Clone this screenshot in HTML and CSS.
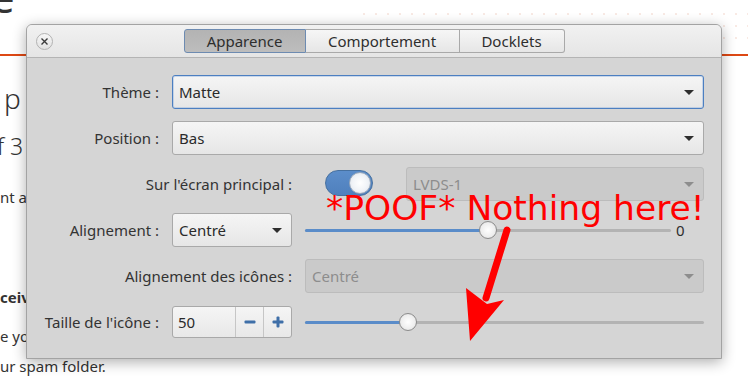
FILE: index.html
```
<!DOCTYPE html>
<html lang="fr">
<head>
    <meta charset="UTF-8">
    <title>Cairo-Dock - Configuration</title>
    <link rel="stylesheet" href="styles.css">
</head>
<body>
    <!-- Page behind the dialog -->
    <header class="site-header">
        <div class="site-title">e</div>
        <div class="site-dots"></div>
    </header>

    <main class="site-body">
        <h2 class="post-title">p</h2>
        <h3 class="post-sub">f 3</h3>
        <p class="post-text">nt a</p>
        <p class="post-strong">ceiv</p>
        <p class="post-text post-near">e yo</p>
        <p class="post-text post-last">ur spam folder.</p>
    </main>

    <!-- Config dialog -->
    <div class="dialog">
        <div class="titlebar">
            <div class="close-btn">
                <svg width="9" height="9" viewBox="0 0 9 9"><path d="M1.5 1.5 L7.5 7.5 M7.5 1.5 L1.5 7.5" stroke="#3a3a3a" stroke-width="1.4"/></svg>
            </div>
            <div class="tabs">
                <div class="tab active tab-1">Apparence</div>
                <div class="tab tab-2">Comportement</div>
                <div class="tab tab-3">Docklets</div>
            </div>
            <div></div>
        </div>

        <div class="form">
            <div class="label">Thème :</div>
            <div class="combo focused span-2"><span>Matte</span><i class="arrow"></i></div>

            <div class="label">Position :</div>
            <div class="combo span-2"><span>Bas</span><i class="arrow"></i></div>

            <div class="label span-label">Sur l'écran principal :</div>
            <div class="screen-cell">
                <div class="toggle"><div class="toggle-knob"></div></div>
                <div class="combo disabled"><span>LVDS-1</span><i class="arrow"></i></div>
            </div>

            <div class="label">Alignement :</div>
            <div class="combo"><span>Centré</span><i class="arrow"></i></div>
            <div class="slider-cell">
                <div class="slider">
                    <div class="track-fill" style="width: 183px;"><div class="knob"></div></div>
                </div>
                <div class="slider-value">0</div>
            </div>

            <div class="label span-label">Alignement des icônes :</div>
            <div class="combo disabled"><span>Centré</span><i class="arrow"></i></div>

            <div class="label">Taille de l'icône :</div>
            <div class="spin">
                <span class="spin-value">50</span>
                <div class="spin-btn">
                    <svg width="12" height="12" viewBox="0 0 12 12"><rect x="0.5" y="4.5" width="11" height="3" rx="1" fill="#3f6fa8"/></svg>
                </div>
                <div class="spin-btn">
                    <svg width="12" height="12" viewBox="0 0 12 12"><rect x="0.5" y="4.5" width="11" height="3" rx="1" fill="#3f6fa8"/><rect x="4.5" y="0.5" width="3" height="11" rx="1" fill="#3f6fa8"/></svg>
                </div>
            </div>
            <div class="slider-cell">
                <div class="slider">
                    <div class="track-fill" style="width: 103px;"><div class="knob"></div></div>
                </div>
            </div>
        </div>
    </div>

    <!-- Annotation drawn on top -->
    <div class="poof">*POOF* Nothing here!</div>
    <svg class="poof-arrow" width="748" height="387" viewBox="0 0 748 387">
        <path d="M507 230 L486 298" stroke="#ff0000" stroke-width="7" stroke-linecap="round"/>
        <path d="M466 288 L487 304 L504 300 L470 341 Z" fill="#ff0000"/>
    </svg>
</body>
</html>
```

FILE: styles.css
```
* {
    margin: 0;
    padding: 0;
    box-sizing: border-box;
}

body {
    width: 748px;
    height: 387px;
    overflow: hidden;
    position: relative;
    background: #ffffff;
    font-family: 'Noto Sans', sans-serif;
    color: #333333;
}

/* Background page */
.site-header {
    display: flex;
    align-items: flex-start;
    height: 56px;
    border-bottom: 2px solid #dd4814;
}

.site-title {
    font-size: 42px;
    line-height: 42px;
    margin-top: -24px;
    margin-left: -9px;
}

.site-dots {
    margin-left: auto;
    margin-top: 8px;
    width: 390px;
    height: 36px;
    background-image: radial-gradient(circle, #f6e3dc 0.6px, transparent 1.1px);
    background-size: 12px 12px;
}

.site-body {
    font-size: 15px;
}

.post-title {
    font-size: 28px;
    line-height: 34px;
    font-weight: 300;
    margin-top: 25px;
    margin-left: 4px;
}

.post-sub {
    font-size: 23px;
    line-height: 28px;
    font-weight: 300;
    margin-top: 17px;
    margin-left: -3px;
}

.post-text {
    line-height: 22px;
    margin-top: 26px;
}

.post-strong {
    line-height: 22px;
    font-weight: 700;
    margin-top: 78px;
}

.post-near {
    margin-top: 17px;
}

.post-last {
    margin-top: 8px;
}

/* Dialog */
.dialog {
    position: absolute;
    left: 26px;
    top: 24px;
    width: 696px;
    height: 335px;
    border: 1px solid #a3a3a3;
    border-radius: 6px 6px 0 0;
    background: #d5d5d5;
    box-shadow: 0 3px 14px rgba(0, 0, 0, 0.32);
    display: flex;
    flex-direction: column;
}

.titlebar {
    height: 33px;
    display: grid;
    grid-template-columns: 1fr auto 1fr;
    align-items: center;
    background: linear-gradient(#f1f1f1, #e5e5e5);
    border-bottom: 1px solid #b4b4b4;
    border-radius: 5px 5px 0 0;
}

.close-btn {
    width: 17px;
    height: 17px;
    margin-left: 9px;
    border-radius: 50%;
    border: 1px solid #b2b2b2;
    background: linear-gradient(#f6f6f6, #e2e2e2);
    display: flex;
    align-items: center;
    justify-content: center;
}

.tabs {
    display: flex;
    height: 24px;
}

.tab {
    display: flex;
    align-items: center;
    justify-content: center;
    font-size: 15px;
    color: #2e2e2e;
    background: linear-gradient(#f6f6f6, #e6e6e6);
    border: 1px solid #a9a9a9;
    border-left: none;
}

.tab-1 { width: 122px; border-left: 1px solid #6d8bb1; border-radius: 3px 0 0 3px; }
.tab-2 { width: 154px; }
.tab-3 { width: 105px; border-radius: 0 3px 3px 0; }

.tab.active {
    background: linear-gradient(#b3b3b3, #bdbdbd);
    border-color: #6d8bb1;
}

/* Form grid */
.form {
    flex: 1;
    display: grid;
    grid-template-columns: 132px 120px 1fr;
    grid-auto-rows: 34px;
    column-gap: 13px;
    row-gap: 12px;
    padding: 17px 17px 0 0;
    font-size: 15px;
}

.label {
    display: flex;
    align-items: center;
    justify-content: flex-end;
    color: #333333;
}

.span-label {
    grid-column: 1 / 3;
}

.span-2 {
    grid-column: 2 / 4;
}

.combo {
    display: flex;
    align-items: center;
    justify-content: space-between;
    padding: 0 9px 0 6px;
    border: 1px solid #a9a9a9;
    border-radius: 3px;
    background: linear-gradient(#f5f5f5, #e6e6e6);
    color: #2a2a2a;
}

.combo.focused {
    border-color: #4c7fc1;
    box-shadow: inset 0 0 0 1px rgba(120, 160, 215, 0.35);
}

.combo.disabled {
    background: #cacaca;
    border-color: #bcbcbc;
    color: #8d8d8d;
}

.arrow {
    width: 0;
    height: 0;
    border-left: 5px solid transparent;
    border-right: 5px solid transparent;
    border-top: 5px solid #2e2e2e;
}

.combo.disabled .arrow {
    border-top-color: #8d8d8d;
}

.screen-cell {
    display: flex;
    align-items: center;
    gap: 33px;
}

.screen-cell .combo {
    flex: 1;
    height: 34px;
}

.toggle {
    width: 48px;
    height: 26px;
    margin-left: 20px;
    margin-top: -2px;
    border-radius: 13px;
    background: linear-gradient(#5b8dca, #4f80bd);
    border: 1px solid #46709f;
    display: flex;
    align-items: center;
    justify-content: flex-end;
    padding-right: 1px;
}

.toggle-knob {
    width: 22px;
    height: 22px;
    border-radius: 50%;
    border: 1px solid #9aa9bb;
    background: radial-gradient(circle, #ffffff 0%, #f0f3f7 55%, #d6dde6 100%);
}

/* Sliders */
.slider-cell {
    display: flex;
    align-items: center;
}

.slider {
    flex: 1;
    height: 3px;
    border-radius: 2px;
    background: #b3b3b3;
}

.track-fill {
    position: relative;
    height: 3px;
    border-radius: 2px;
    background: #5a8cc9;
}

.knob {
    position: absolute;
    top: -8px;
    right: -9px;
    width: 18px;
    height: 18px;
    border-radius: 50%;
    border: 1px solid #8c8c8c;
    background: radial-gradient(circle, #ffffff 0%, #eeeeee 60%, #d4d4d4 100%);
}

.slider-value {
    width: 33px;
    padding-left: 5px;
    color: #2e2e2e;
}

/* Spin box */
.spin {
    height: 32px;
    align-self: center;
    display: flex;
    border: 1px solid #a9a9a9;
    border-radius: 3px;
    background: linear-gradient(#f5f5f5, #e8e8e8);
    color: #2a2a2a;
}

.spin-value {
    flex: 1;
    display: flex;
    align-items: center;
    padding-left: 5px;
}

.spin-btn {
    width: 28px;
    display: flex;
    align-items: center;
    justify-content: center;
    border-left: 1px solid #c6c6c6;
}

/* Annotation overlay */
.poof {
    position: absolute;
    left: 326px;
    top: 191px;
    font-family: 'DejaVu Sans', sans-serif;
    font-size: 34.5px;
    line-height: 34.5px;
    color: #ff0000;
    white-space: nowrap;
}

.poof-arrow {
    position: absolute;
    left: 0;
    top: 0;
}
```
